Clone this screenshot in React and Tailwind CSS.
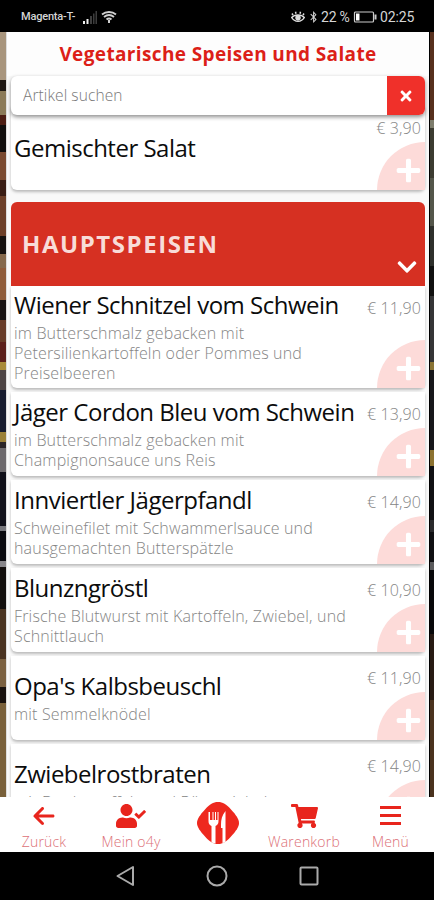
import clsx from 'clsx';
import { FaBluetoothB, FaChevronDown, FaPlus, FaShoppingCart, FaTimes, FaUserCheck } from 'react-icons/fa';
import { FaArrowLeft } from 'react-icons/fa6';

const hauptspeisen = [
  { name: 'Wiener Schnitzel vom Schwein', info: 'im Butterschmalz gebacken mit Petersilienkartoffeln oder Pommes und Preiselbeeren', preis: '11,90', big: true },
  { name: 'Jäger Cordon Bleu vom Schwein', info: 'im Butterschmalz gebacken mit Champignonsauce uns Reis', preis: '13,90' },
  { name: 'Innviertler Jägerpfandl', info: 'Schweinefilet mit Schwammerlsauce und hausgemachten Butterspätzle', preis: '14,90' },
  { name: 'Blunzngröstl', info: 'Frische Blutwurst mit Kartoffeln, Zwiebel, und Schnittlauch', preis: '10,90' },
  { name: "Opa's Kalbsbeuschl", info: 'mit Semmelknödel', preis: '11,90' },
  { name: 'Zwiebelrostbraten', info: 'mit Bratkartoffeln und Röstzwiebel', preis: '14,90' },
];

// [height, color] bands of the restaurant photo left and right of the page
const wandLinks = [
  [48, '#a8957d'], [11, '#1d1712'], [24, '#8b7a58'], [10, '#4c1d13'], [27, '#100d0c'], [28, '#7a4a30'],
  [16, '#3a1d14'], [40, '#6d4029'], [18, '#15110f'], [14, '#85694c'], [32, '#8f5c3a'], [20, '#181313'],
  [22, '#673b28'], [20, '#5c1f1b'], [8, '#a98a38'], [20, '#4d4444'], [42, '#171c2f'], [10, '#9b8138'],
  [6, '#2a2528'], [24, '#6c696c'], [54, '#101019'], [5, '#77777c'], [30, '#0b0b10'], [6, '#88868a'],
  [42, '#120e0c'], [50, '#4a3320'], [28, '#7a6040'], [16, '#17100d'], [94, '#79603a'],
];
const wandRechts = [
  [88, '#57301d'], [8, '#7d7c6c'], [50, '#3c3c31'], [48, '#54564a'], [40, '#2e302c'], [30, '#111111'],
  [66, '#353536'], [8, '#8a7434'], [80, '#17171b'], [16, '#8c7230'], [54, '#111114'], [12, '#2a2a2c'],
  [30, '#101012'], [8, '#5a5a5c'], [64, '#08080a'], [66, '#271a13'], [97, '#4a321e'],
];

function Wand({ baender, className }) {
  return (
    <div className={clsx('flex shrink-0 flex-col overflow-hidden', className)}>
      {baender.map(([hoehe, farbe], i) => (
        <div key={i} className="shrink-0" style={{ height: hoehe, backgroundColor: farbe }} />
      ))}
    </div>
  );
}

function StatusBar() {
  return (
    <div className="flex h-8 shrink-0 items-center justify-between bg-black pl-[21px] pr-[19px] pt-0.5 font-['Roboto',sans-serif] text-[#d5d5d5]">
      <div className="flex items-center">
        <span className="w-[55px] whitespace-nowrap text-[11px] font-medium tracking-[-0.2px]">Magenta-T-</span>
        <svg className="ml-[7px]" width="15" height="13" viewBox="0 0 15 13">
          <path d="M0 10h2v3H0zM3.500 8h2v5h-2z" fill="#eee" />
          <path d="M7 5h2v8H7zM10 2.500h1.500V13H10zM12.500 0H14v13h-1.500z" fill="#3d3d3d" />
        </svg>
        <svg className="ml-[3px]" width="16" height="13" viewBox="0 0 16 13" fill="none" stroke="#d0d0d0" strokeWidth="1.900">
          <path d="M1 3.500C5 .2 11 .2 15 3.500M3 6c3-2.400 7-2.400 10 0M5.500 8.500c1.500-1.200 3.500-1.200 5 0" />
          <path d="M8 9v3" strokeWidth="2" />
        </svg>
      </div>
      <div className="flex items-center text-[14px] leading-none">
        <svg width="14" height="12" viewBox="0 0 14 12" fill="none" stroke="#ddd" strokeWidth="1.500">
          <path d="M.7 6.500C3.500 11.500 10.500 11.500 13.300 6.500C10.500 3 3.500 3 .7 6.500zM2 4.200L1 2.500M5 2.700L4.500.8M9 2.700L9.500.8M12 4.200l1-1.700" />
          <circle cx="7" cy="6.800" r="2" fill="#ddd" />
        </svg>
        <FaBluetoothB className="ml-1 mr-[3px] h-3 w-[9px]" />
        <span className="w-[32px] whitespace-nowrap tracking-[-0.2px]">22 %</span>
        <svg width="25" height="12" viewBox="0 0 25 12" fill="none" stroke="#ccc">
          <rect x="1.500" y="1" width="19" height="10" rx="1" strokeWidth="1.200" />
          <path d="M3 2.500h3.500v7H3z" fill="#fff" stroke="none" />
          <path d="M22.500 3.500v5" strokeWidth="2" />
        </svg>
        <span className="ml-0.5 w-[35px] whitespace-nowrap tracking-[-0.1px]">02:25</span>
      </div>
    </div>
  );
}

function Artikel({ name, info, preis, big }) {
  return (
    <div className={clsx('relative mb-1 flex shrink-0 flex-col justify-center rounded-b-md bg-white pl-[3px] shadow-[0_2px_3px_rgba(0,0,0,0.25)]', big ? 'h-[102px] pb-px' : 'h-[84px]', info && !big && 'pb-px')}>
      <div className={clsx('h-8 whitespace-nowrap text-[24px] tracking-[-0.5px] text-[#0c0c0c]', info ? 'leading-[27px]' : 'leading-[32px]')}>{name}</div>
      {info && <div className="w-[350px] text-[16px] font-light leading-5 tracking-[0.17px] text-[#858585]">{info}</div>}
      <div className="absolute right-1 top-3 text-[16px] font-light leading-5 tracking-[0.1px] text-[#858585]">€ {preis}</div>
      <button className="absolute bottom-0 right-0 h-12 w-12 rounded-br-md rounded-tl-full bg-[#fddbd9] text-white">
        <FaPlus className="ml-[18px] mt-[9px] h-[27px] w-[27px]" />
      </button>
    </div>
  );
}

function NavItem({ label, className, children }) {
  return (
    <div className={clsx('flex shrink-0 flex-col items-center text-[#e8251d]', className)}>
      <div className="flex h-[37px] items-center">{children}</div>
      <span className="whitespace-nowrap text-[14px] font-light leading-4 tracking-[0.2px] text-[#dc6f76]">{label}</span>
    </div>
  );
}

export default function App() {
  return (
    <div className="flex h-[900px] w-[434px] flex-col overflow-hidden bg-black font-['Open_Sans',sans-serif]">
      <StatusBar />

      <div className="flex h-[765px] shrink-0 overflow-hidden">
        <Wand baender={wandLinks} className="w-1.5" />
        <main className="flex w-[423px] shrink-0 flex-col overflow-hidden border-l border-[#ddd] bg-[#f9f9f9] pl-1 pr-1">
          <h1 className="-ml-1 -mr-1 h-11 shrink-0 whitespace-nowrap bg-[#fdfdfd] text-center text-[19px] font-bold leading-[44px] tracking-[0.37px] text-[#dc1f18]">
            Vegetarische Speisen und Salate
          </h1>
          <div className="relative z-10 flex h-[39px] shrink-0 overflow-hidden rounded-md bg-white shadow-[0_2px_4px_rgba(0,0,0,0.45)]">
            <input type="text" placeholder="Artikel suchen" className="min-w-0 flex-1 pl-[12px] text-[15.500px] font-light tracking-[0.1px] placeholder:text-[#777]" />
            <button className="flex w-[38px] items-center justify-center bg-[#f0302a] text-white">
              <FaTimes className="h-4 w-4" />
            </button>
          </div>

          <div className="-mt-[9px] shrink-0">
            <Artikel name="Gemischter Salat" preis="3,90" />
          </div>

          <div className="mt-2 flex h-[84px] shrink-0 items-center justify-between rounded-t-md bg-[#d63022] pl-[11px] pr-[7px]">
            <h2 className="text-[24px] font-bold tracking-[1.550px] text-[#f8dcd8]">HAUPTSPEISEN</h2>
            <FaChevronDown className="mt-[45px] h-[22px] w-[22px] text-white" />
          </div>

          {hauptspeisen.map((a) => (
            <Artikel key={a.name} {...a} />
          ))}
        </main>
        <div className="w-px shrink-0 bg-black" />
        <Wand baender={wandRechts} className="w-1" />
      </div>

      <nav className="flex h-[55px] shrink-0 bg-white">
        <NavItem label="Zurück" className="w-[88px]">
          <FaArrowLeft className="h-6 w-[22px]" />
        </NavItem>
        <NavItem label="Mein o4y" className="w-[86px]">
          <FaUserCheck className="h-6 w-[30px]" />
        </NavItem>
        <div className="flex w-[87px] shrink-0 justify-center pt-[5px]">
          <svg width="42" height="42" viewBox="0 0 42 42">
            <path d="M21 0C26 0 29 2 34 7.500C39 13 42 17 42 21S39 29 34 34.500C29 40 26 42 21 42S13 40 8 34.500C3 29 0 25 0 21S3 13 8 7.500C13 2 16 0 21 0z" fill="#ee281e" />
            <path d="M11.500 10v9c0 3 1.200 4.300 3 5V40.500l4 1V24c1.800-.7 3-2 3-5v-9h-1v8h-1.500v-8h-1v8h-1.500v-8h-1v8H13v-8z" fill="#fff" />
            <path d="M28.500 9C25 13 24 18 24 22.500V26h1.500v15.200l3-1.200z" fill="#fff" />
          </svg>
        </div>
        <NavItem label="Warenkorb" className="w-[86px]">
          <FaShoppingCart className="h-6 w-[27px]" />
        </NavItem>
        <NavItem label="Menü" className="w-[87px]">
          <svg width="21" height="19" viewBox="0 0 21 19" fill="none" stroke="currentColor" strokeWidth="3">
            <path d="M0 1.500h21M0 9.500h21M0 17.500h21" />
          </svg>
        </NavItem>
      </nav>

      <div className="flex h-12 shrink-0 items-center justify-center gap-[71px] bg-black">
        <svg width="20" height="22" viewBox="0 0 20 22" fill="none" stroke="#aaa" strokeWidth="2" strokeLinejoin="round">
          <path d="M18 2v18L2.500 11z" />
        </svg>
        <svg width="22" height="22" viewBox="0 0 22 22" fill="none" stroke="#aaa" strokeWidth="2">
          <circle cx="11" cy="11" r="9.500" />
        </svg>
        <svg width="20" height="20" viewBox="0 0 20 20" fill="none" stroke="#aaa" strokeWidth="2">
          <rect x="1.500" y="1.500" width="17" height="17" rx="1" />
        </svg>
      </div>
    </div>
  );
}
